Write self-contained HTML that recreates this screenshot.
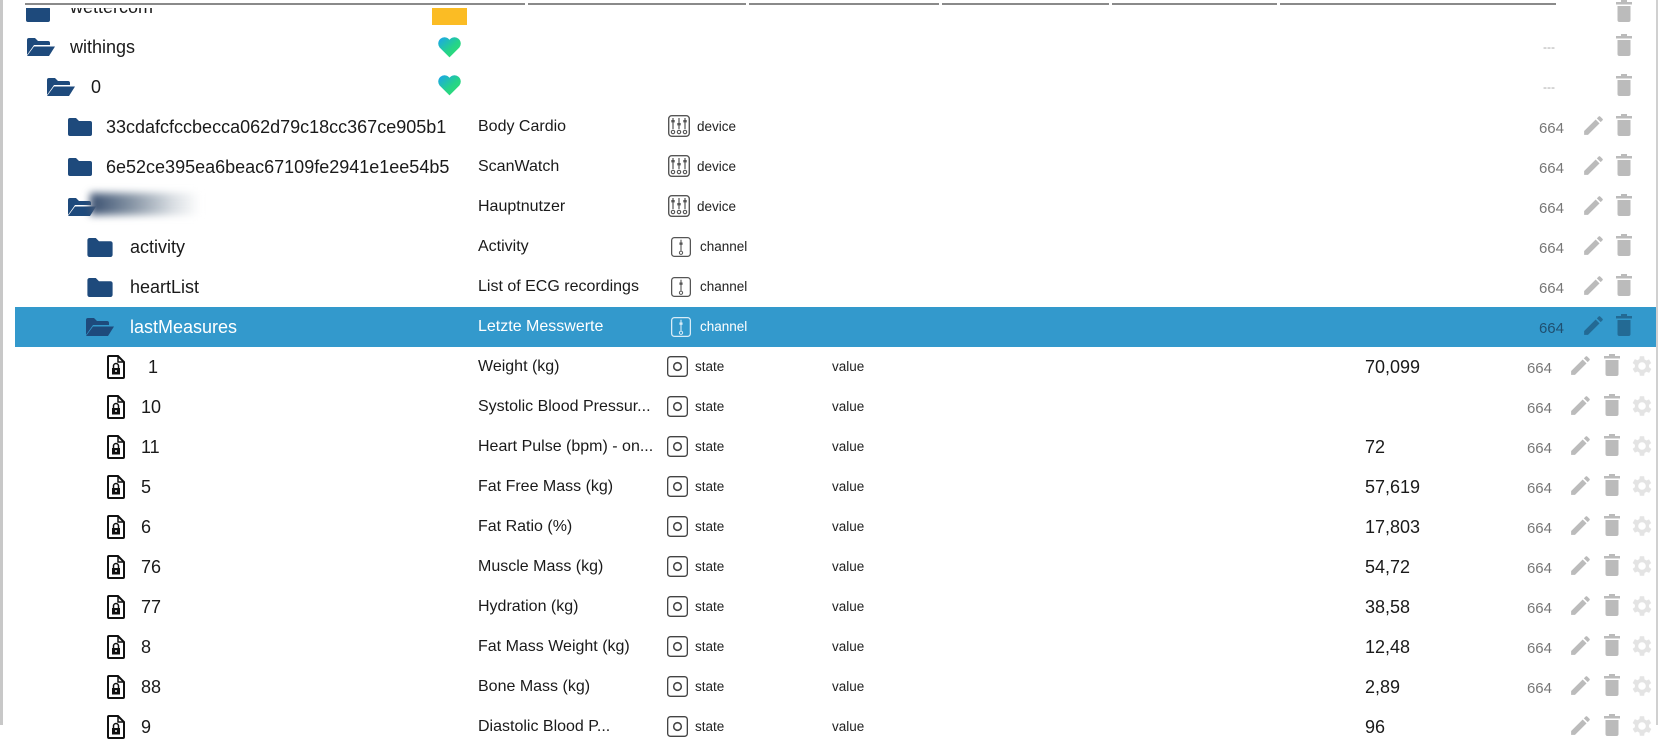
<!DOCTYPE html>
<html><head><meta charset="utf-8"><style>
*{margin:0;padding:0;box-sizing:border-box}
body{width:1658px;height:725px;overflow:hidden;background:#fff;font-family:"Liberation Sans",sans-serif;position:relative;color:#222}
.r{position:absolute;left:15px;width:1641px;height:40px}
.r>*{position:absolute}
.t{line-height:40px;white-space:nowrap}
.nm{font-size:18px;color:#1a1a1a}
.c2{font-size:16px;left:463px;color:#1a1a1a}
.rl{font-size:13.5px;color:#222}
.acl{font-size:15px;color:#777;text-align:right;width:60px;top:2px}
.sel{background:#3399cc}
.sel .t{color:#fff}
svg{display:block}
.p1{left:1566px;top:6px;color:#bbb}
.t1{left:1600px;top:6px;color:#bbb}
.p2{left:1553px;top:6px;color:#bbb}
.t2{left:1588px;top:6px;color:#bbb}
.g2{left:1614px;top:6px;color:#e4e4e4}
</style></head><body>
<div style="position:absolute;left:0;top:0;width:3px;height:725px;background:#c8c8c8"></div>
<div style="position:absolute;left:1656px;top:0;width:2px;height:725px;background:#d0d0d0"></div>

<svg width="0" height="0" style="position:absolute">
<defs>
<symbol id="fc" viewBox="0 0 26 20"><path d="M1 3a2 2 0 0 1 2-2h6l3 3h11a2 2 0 0 1 2 2v11a2 2 0 0 1-2 2H3a2 2 0 0 1-2-2z" fill="currentColor"/></symbol>
<symbol id="fo" viewBox="0 0 30 20"><path d="M1 3a2 2 0 0 1 2-2h6l3 3h10a2 2 0 0 1 2 2v2H8L1 18z" fill="currentColor"/><path d="M8 9.5h21l-6 9.5H1z" fill="currentColor"/></symbol>
<symbol id="dev" viewBox="0 0 22 22"><rect x="0.7" y="0.7" width="20.6" height="20.6" rx="3" fill="none" stroke="currentColor" stroke-width="1.4"/><path d="M5 3v11M11 3v11M17 3v11" stroke="currentColor" stroke-width="1.2"/><rect x="3.3" y="5" width="3.4" height="2.4" fill="currentColor"/><rect x="9.3" y="8" width="3.4" height="2.4" fill="currentColor"/><rect x="15.3" y="5" width="3.4" height="2.4" fill="currentColor"/><circle cx="5" cy="17" r="1.7" fill="none" stroke="currentColor" stroke-width="1.1"/><circle cx="11" cy="17" r="1.7" fill="none" stroke="currentColor" stroke-width="1.1"/><circle cx="17" cy="17" r="1.7" fill="none" stroke="currentColor" stroke-width="1.1"/></symbol>
<symbol id="ch" viewBox="0 0 22 22"><rect x="0.7" y="0.7" width="20.6" height="20.6" rx="3" fill="none" stroke="currentColor" stroke-width="1.4"/><path d="M11 3v12" stroke="currentColor" stroke-width="1.2"/><rect x="9.3" y="6" width="3.4" height="2.6" fill="currentColor"/><circle cx="11" cy="17.3" r="1.8" fill="none" stroke="currentColor" stroke-width="1.1"/></symbol>
<symbol id="st" viewBox="0 0 22 22"><rect x="0.7" y="0.7" width="20.6" height="20.6" rx="3" fill="none" stroke="currentColor" stroke-width="1.4"/><circle cx="11" cy="11" r="4" fill="none" stroke="currentColor" stroke-width="1.6"/></symbol>
<symbol id="fl" viewBox="0 0 18 24"><path d="M2 1h9l6 6v15a1 1 0 0 1-1 1H2a1 1 0 0 1-1-1V2a1 1 0 0 1 1-1z" fill="none" stroke="#111" stroke-width="2"/><path d="M11 1v6h6" fill="none" stroke="#111" stroke-width="1.5"/><rect x="5" y="13" width="8" height="6.5" fill="#111"/><path d="M6.5 13v-2a2.5 2.5 0 0 1 5 0v2" fill="none" stroke="#111" stroke-width="1.5"/><circle cx="9" cy="16" r="1" fill="#fff"/></symbol>
<symbol id="pen" viewBox="0 0 24 24"><path d="M3 17.3V21h3.7L17.8 9.9l-3.7-3.7zM20.7 7a1 1 0 0 0 0-1.4l-2.3-2.3a1 1 0 0 0-1.4 0l-1.8 1.8 3.7 3.7z" fill="currentColor"/></symbol>
<symbol id="tr" viewBox="0 0 18 24"><path d="M1 3h16v2.5H1z M6 1h6v2H6z" fill="currentColor"/><path d="M2.5 7h13v14a2 2 0 0 1-2 2h-9a2 2 0 0 1-2-2z" fill="currentColor"/></symbol>
<symbol id="gr" viewBox="0 0 24 24"><path d="M19.4 13a7.5 7.5 0 0 0 0-2l2.1-1.6-2-3.5-2.5 1a7.3 7.3 0 0 0-1.7-1L15 3h-4l-.4 2.7a7.3 7.3 0 0 0-1.7 1l-2.5-1-2 3.5L6.5 11a7.5 7.5 0 0 0 0 2l-2.1 1.6 2 3.5 2.5-1a7.3 7.3 0 0 0 1.7 1L11 21h4l.4-2.7a7.3 7.3 0 0 0 1.7-1l2.5 1 2-3.5zM13 15.5a3.5 3.5 0 1 1 0-7 3.5 3.5 0 0 1 0 7z" fill="currentColor" transform="translate(-1 0)"/></symbol>
<linearGradient id="hg" x1="0" y1="0" x2="1" y2="1"><stop offset="0" stop-color="#1aa3f0"/><stop offset="0.55" stop-color="#25d38a"/><stop offset="1" stop-color="#33e06a"/></linearGradient>
<symbol id="ht" viewBox="0 0 24 22"><path d="M12 21L2.5 11.5A5.5 5.5 0 0 1 12 4a5.5 5.5 0 0 1 9.5 7.5z" fill="url(#hg)"/></symbol>
</defs></svg>

<div class="r" style="top:-13px">
<svg style="left:10px;top:16px;color:#1e4a7c" width="26" height="20"><use href="#fc"/></svg>
<span class="t nm" style="left:55px">wettercom</span>
<div style="left:417px;top:21px;width:35px;height:17px;background:#fbbc24"></div>
<svg class="t1" style="top:12px" width="18" height="24"><use href="#tr"/></svg>
</div>
<div style="position:absolute;left:15px;top:0;width:1530px;height:8px;background:#fff"></div>
<div style="position:absolute;left:25px;top:3px;width:1531px;height:2px;background:#8a8a8a"></div>
<div style="position:absolute;left:525px;top:0;width:3px;height:6px;background:#fff"></div>
<div style="position:absolute;left:746px;top:0;width:3px;height:6px;background:#fff"></div>
<div style="position:absolute;left:939px;top:0;width:3px;height:6px;background:#fff"></div>
<div style="position:absolute;left:1109px;top:0;width:3px;height:6px;background:#fff"></div>
<div style="position:absolute;left:1277px;top:0;width:3px;height:6px;background:#fff"></div>

<div class="r" style="top:27px">
<svg style="left:11px;top:10px;color:#1e4a7c" width="30" height="20"><use href="#fo"/></svg>
<span class="t nm" style="left:55px">withings</span>
<svg style="left:422px;top:8px" width="25" height="24"><use href="#ht"/></svg>
<span class="t" style="left:1528px;color:#aaa;font-size:12px">---</span>
<svg class="t1" width="18" height="24"><use href="#tr"/></svg>
</div>
<div class="r" style="top:67px">
<svg style="left:31px;top:10px;color:#1e4a7c" width="30" height="20"><use href="#fo"/></svg>
<span class="t nm" style="left:76px">0</span>
<svg style="left:422px;top:6px" width="25" height="24"><use href="#ht"/></svg>
<span class="t" style="left:1528px;color:#aaa;font-size:12px">---</span>
<svg class="t1" width="18" height="24"><use href="#tr"/></svg>
</div>

<div class="r" style="top:107px">
<svg style="left:52px;top:10px;color:#1e4a7c" width="26" height="20"><use href="#fc"/></svg>
<span class="t nm" style="left:91px">33cdafcfccbecca062d79c18cc367ce905b1</span>
<span class="t c2">Body Cardio</span>
<svg style="left:653px;top:8px;color:#555" width="22" height="22"><use href="#dev"/></svg>
<span class="t rl" style="left:682px">device</span>
<span class="t acl" style="left:1489px">664</span>
<svg class="p1" width="25" height="25"><use href="#pen"/></svg>
<svg class="t1" width="18" height="24"><use href="#tr"/></svg>
</div>
<div class="r" style="top:147px">
<svg style="left:52px;top:10px;color:#1e4a7c" width="26" height="20"><use href="#fc"/></svg>
<span class="t nm" style="left:91px">6e52ce395ea6beac67109fe2941e1ee54b5</span>
<span class="t c2">ScanWatch</span>
<svg style="left:653px;top:8px;color:#555" width="22" height="22"><use href="#dev"/></svg>
<span class="t rl" style="left:682px">device</span>
<span class="t acl" style="left:1489px">664</span>
<svg class="p1" width="25" height="25"><use href="#pen"/></svg>
<svg class="t1" width="18" height="24"><use href="#tr"/></svg>
</div>
<div class="r" style="top:187px">
<svg style="left:52px;top:10px;color:#1e4a7c" width="30" height="20"><use href="#fo"/></svg>
<div style="left:75px;top:6px;width:110px;height:22px;background:linear-gradient(90deg,#3a5070 0%,#8a98a8 40%,#d8dde2 75%,#fff 100%);filter:blur(4px)"></div>
<span class="t c2">Hauptnutzer</span>
<svg style="left:653px;top:8px;color:#555" width="22" height="22"><use href="#dev"/></svg>
<span class="t rl" style="left:682px">device</span>
<span class="t acl" style="left:1489px">664</span>
<svg class="p1" width="25" height="25"><use href="#pen"/></svg>
<svg class="t1" width="18" height="24"><use href="#tr"/></svg>
</div>
<div class="r" style="top:227px">
<svg style="left:71px;top:10px;color:#1e4a7c" width="28" height="21"><use href="#fc"/></svg>
<span class="t nm" style="left:115px">activity</span>
<span class="t c2">Activity</span>
<svg style="left:656px;top:9px;color:#555" width="20" height="22"><use href="#ch"/></svg>
<span class="t rl" style="left:685px">channel</span>
<span class="t acl" style="left:1489px">664</span>
<svg class="p1" width="25" height="25"><use href="#pen"/></svg>
<svg class="t1" width="18" height="24"><use href="#tr"/></svg>
</div>
<div class="r" style="top:267px">
<svg style="left:71px;top:10px;color:#1e4a7c" width="28" height="21"><use href="#fc"/></svg>
<span class="t nm" style="left:115px">heartList</span>
<span class="t c2">List of ECG recordings</span>
<svg style="left:656px;top:9px;color:#555" width="20" height="22"><use href="#ch"/></svg>
<span class="t rl" style="left:685px">channel</span>
<span class="t acl" style="left:1489px">664</span>
<svg class="p1" width="25" height="25"><use href="#pen"/></svg>
<svg class="t1" width="18" height="24"><use href="#tr"/></svg>
</div>
<div class="r sel" style="top:307px">
<svg style="left:70px;top:10px;color:#1e4a7c" width="30" height="20"><use href="#fo"/></svg>
<span class="t nm" style="left:115px">lastMeasures</span>
<span class="t c2">Letzte Messwerte</span>
<svg style="left:656px;top:9px;color:#d8ecf7" width="20" height="22"><use href="#ch"/></svg>
<span class="t rl" style="left:685px">channel</span>
<span class="t acl" style="left:1489px;color:#1f4f70">664</span>
<svg class="p1" style="color:#236a94" width="25" height="25"><use href="#pen"/></svg>
<svg class="t1" style="color:#236a94" width="18" height="24"><use href="#tr"/></svg>
</div>

<div class="r" style="top:347px"><svg style="left:92px;top:8px" width="18" height="24"><use href="#fl"/></svg><span class="t nm" style="left:133px">1</span><span class="t c2">Weight (kg)</span><svg style="left:652px;top:9px;color:#444" width="21" height="21"><use href="#st"/></svg><span class="t rl" style="left:680px">state</span><span class="t rl" style="left:817px">value</span><span class="t nm" style="left:1350px">70,099</span><span class="t acl" style="left:1477px">664</span><svg class="p2" width="25" height="25"><use href="#pen"/></svg><svg class="t2" width="18" height="24"><use href="#tr"/></svg><svg class="g2" width="26" height="26"><use href="#gr"/></svg></div>
<div class="r" style="top:387px"><svg style="left:92px;top:8px" width="18" height="24"><use href="#fl"/></svg><span class="t nm" style="left:126px">10</span><span class="t c2">Systolic Blood Pressur...</span><svg style="left:652px;top:9px;color:#444" width="21" height="21"><use href="#st"/></svg><span class="t rl" style="left:680px">state</span><span class="t rl" style="left:817px">value</span><span class="t acl" style="left:1477px">664</span><svg class="p2" width="25" height="25"><use href="#pen"/></svg><svg class="t2" width="18" height="24"><use href="#tr"/></svg><svg class="g2" width="26" height="26"><use href="#gr"/></svg></div>
<div class="r" style="top:427px"><svg style="left:92px;top:8px" width="18" height="24"><use href="#fl"/></svg><span class="t nm" style="left:126px">11</span><span class="t c2">Heart Pulse (bpm) - on...</span><svg style="left:652px;top:9px;color:#444" width="21" height="21"><use href="#st"/></svg><span class="t rl" style="left:680px">state</span><span class="t rl" style="left:817px">value</span><span class="t nm" style="left:1350px">72</span><span class="t acl" style="left:1477px">664</span><svg class="p2" width="25" height="25"><use href="#pen"/></svg><svg class="t2" width="18" height="24"><use href="#tr"/></svg><svg class="g2" width="26" height="26"><use href="#gr"/></svg></div>
<div class="r" style="top:467px"><svg style="left:92px;top:8px" width="18" height="24"><use href="#fl"/></svg><span class="t nm" style="left:126px">5</span><span class="t c2">Fat Free Mass (kg)</span><svg style="left:652px;top:9px;color:#444" width="21" height="21"><use href="#st"/></svg><span class="t rl" style="left:680px">state</span><span class="t rl" style="left:817px">value</span><span class="t nm" style="left:1350px">57,619</span><span class="t acl" style="left:1477px">664</span><svg class="p2" width="25" height="25"><use href="#pen"/></svg><svg class="t2" width="18" height="24"><use href="#tr"/></svg><svg class="g2" width="26" height="26"><use href="#gr"/></svg></div>
<div class="r" style="top:507px"><svg style="left:92px;top:8px" width="18" height="24"><use href="#fl"/></svg><span class="t nm" style="left:126px">6</span><span class="t c2">Fat Ratio (%)</span><svg style="left:652px;top:9px;color:#444" width="21" height="21"><use href="#st"/></svg><span class="t rl" style="left:680px">state</span><span class="t rl" style="left:817px">value</span><span class="t nm" style="left:1350px">17,803</span><span class="t acl" style="left:1477px">664</span><svg class="p2" width="25" height="25"><use href="#pen"/></svg><svg class="t2" width="18" height="24"><use href="#tr"/></svg><svg class="g2" width="26" height="26"><use href="#gr"/></svg></div>
<div class="r" style="top:547px"><svg style="left:92px;top:8px" width="18" height="24"><use href="#fl"/></svg><span class="t nm" style="left:126px">76</span><span class="t c2">Muscle Mass (kg)</span><svg style="left:652px;top:9px;color:#444" width="21" height="21"><use href="#st"/></svg><span class="t rl" style="left:680px">state</span><span class="t rl" style="left:817px">value</span><span class="t nm" style="left:1350px">54,72</span><span class="t acl" style="left:1477px">664</span><svg class="p2" width="25" height="25"><use href="#pen"/></svg><svg class="t2" width="18" height="24"><use href="#tr"/></svg><svg class="g2" width="26" height="26"><use href="#gr"/></svg></div>
<div class="r" style="top:587px"><svg style="left:92px;top:8px" width="18" height="24"><use href="#fl"/></svg><span class="t nm" style="left:126px">77</span><span class="t c2">Hydration (kg)</span><svg style="left:652px;top:9px;color:#444" width="21" height="21"><use href="#st"/></svg><span class="t rl" style="left:680px">state</span><span class="t rl" style="left:817px">value</span><span class="t nm" style="left:1350px">38,58</span><span class="t acl" style="left:1477px">664</span><svg class="p2" width="25" height="25"><use href="#pen"/></svg><svg class="t2" width="18" height="24"><use href="#tr"/></svg><svg class="g2" width="26" height="26"><use href="#gr"/></svg></div>
<div class="r" style="top:627px"><svg style="left:92px;top:8px" width="18" height="24"><use href="#fl"/></svg><span class="t nm" style="left:126px">8</span><span class="t c2">Fat Mass Weight (kg)</span><svg style="left:652px;top:9px;color:#444" width="21" height="21"><use href="#st"/></svg><span class="t rl" style="left:680px">state</span><span class="t rl" style="left:817px">value</span><span class="t nm" style="left:1350px">12,48</span><span class="t acl" style="left:1477px">664</span><svg class="p2" width="25" height="25"><use href="#pen"/></svg><svg class="t2" width="18" height="24"><use href="#tr"/></svg><svg class="g2" width="26" height="26"><use href="#gr"/></svg></div>
<div class="r" style="top:667px"><svg style="left:92px;top:8px" width="18" height="24"><use href="#fl"/></svg><span class="t nm" style="left:126px">88</span><span class="t c2">Bone Mass (kg)</span><svg style="left:652px;top:9px;color:#444" width="21" height="21"><use href="#st"/></svg><span class="t rl" style="left:680px">state</span><span class="t rl" style="left:817px">value</span><span class="t nm" style="left:1350px">2,89</span><span class="t acl" style="left:1477px">664</span><svg class="p2" width="25" height="25"><use href="#pen"/></svg><svg class="t2" width="18" height="24"><use href="#tr"/></svg><svg class="g2" width="26" height="26"><use href="#gr"/></svg></div>
<div class="r" style="top:707px"><svg style="left:92px;top:8px" width="18" height="24"><use href="#fl"/></svg><span class="t nm" style="left:126px">9</span><span class="t c2">Diastolic Blood P...</span><svg style="left:652px;top:9px;color:#444" width="21" height="21"><use href="#st"/></svg><span class="t rl" style="left:680px">state</span><span class="t rl" style="left:817px">value</span><span class="t nm" style="left:1350px">96</span><svg class="p2" width="25" height="25"><use href="#pen"/></svg><svg class="t2" width="18" height="24"><use href="#tr"/></svg><svg class="g2" width="26" height="26"><use href="#gr"/></svg></div>
</body></html>
